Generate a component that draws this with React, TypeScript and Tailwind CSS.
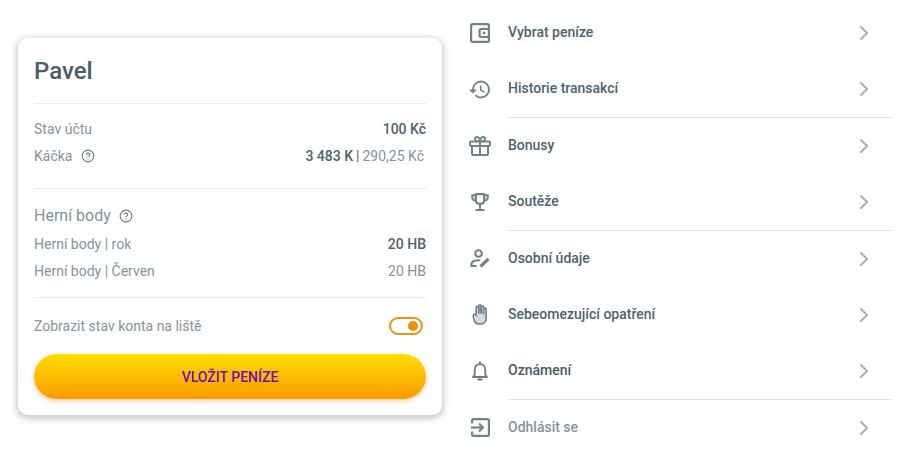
import React from "react";
import { ChevronRight, CircleHelp } from "lucide-react";
import { MdHistory } from "react-icons/md";

const WalletIcon = () => (
  <svg width="20" height="20" viewBox="0 0 20 20" fill="none" stroke="currentColor" strokeWidth="2.2">
    <path d="M1.1 2.5 C1.1 1.6 1.6 1.1 2.5 1.1 H17.5 C18.4 1.1 18.9 1.6 18.9 2.5 V17.5 C18.9 18.4 18.4 18.9 17.5 18.9 H2.5 C1.6 18.9 1.1 18.4 1.1 17.5 Z" />
    <path d="M18.9 6 H11 C10.2 6 9.6 6.6 9.6 7.4 V12.6 C9.6 13.4 10.2 14 11 14 H18.9" />
    <circle cx="14" cy="10" r="1.4" fill="currentColor" stroke="none" />
  </svg>
);

const GiftIcon = () => (
  <svg width="22" height="20" viewBox="0 0 22 20" fill="none" stroke="currentColor" strokeWidth="2" strokeLinejoin="round">
    <rect x="1" y="5.5" width="20" height="4.5" rx="1" />
    <path d="M3 10 V17.5 C3 18.4 3.6 19 4.5 19 H17.5 C18.4 19 19 18.4 19 17.5 V10" />
    <path d="M11 5.5 V19" />
    <path d="M11 5.5 C9 5.5 6 5.2 6 3 C6 1.6 7.2 1 8 1 C9.8 1 11 3.4 11 5.5 C11 3.4 12.2 1 14 1 C14.8 1 16 1.6 16 3 C16 5.2 13 5.5 11 5.5 Z" />
  </svg>
);

const TrophyIcon = () => (
  <svg width="18" height="18" viewBox="0 0 18 18" fill="none" stroke="currentColor" strokeWidth="2.3" strokeLinejoin="round">
    <path d="M4.8 1.2 H13.2 V7 C13.2 9.4 11.4 10.8 9 10.8 C6.6 10.8 4.8 9.4 4.8 7 Z" />
    <path d="M4.5 2.2 H1.2 V4 C1.2 6 2.5 7.6 4.8 7.6" strokeWidth="2" />
    <path d="M13.5 2.2 H16.8 V4 C16.8 6 15.5 7.6 13.2 7.6" strokeWidth="2" />
    <path d="M9 11 V16.5" strokeWidth="2" />
    <path d="M4.5 17 H13.5" strokeWidth="2" />
  </svg>
);

const PersonEditIcon = () => (
  <svg width="20" height="20" viewBox="0 0 20 20" fill="none" stroke="currentColor" strokeWidth="2.1" strokeLinecap="round" strokeLinejoin="round">
    <circle cx="8.5" cy="4.5" r="3.3" />
    <path d="M1.5 17 V15.5 C1.5 12.8 5 11.3 9.5 11.3" />
    <path d="M1.5 17 H6" />
    <path d="M10.5 17.5 L18.5 9.8" strokeWidth="3.2" strokeLinecap="butt" />
  </svg>
);

const HandIcon = () => (
  <svg width="16" height="21" viewBox="0 0 16 21" fill="none" stroke="currentColor" strokeWidth="1.7" strokeLinecap="round" strokeLinejoin="round">
    <path d="M5 10 H13.5 V15 C13.5 17.5 12 19.4 9 19.4 H7 C5 19.4 3.8 18.5 3.2 17 L4.2 12 Z" fill="currentColor" fillOpacity="0.3" stroke="none" />
    <path d="M4.2 10 V3.6 C4.2 2.8 4.8 2.3 5.4 2.3 C6.1 2.3 6.7 2.8 6.7 3.6 V9" />
    <path d="M6.7 9 V2 C6.7 1.3 7.3 0.9 7.9 0.9 C8.5 0.9 9.1 1.3 9.1 2 V9" />
    <path d="M9.1 9 V3 C9.1 2.3 9.7 1.8 10.3 1.8 C10.9 1.8 11.5 2.3 11.5 3 V9.5" />
    <path d="M11.5 9.5 V5.2 C11.5 4.5 12.1 4 12.8 4 C13.5 4 14.1 4.5 14.1 5.2 V14.5 C14.1 17.8 12 20 9 20 H7 C4.4 20 3.2 19 2.5 17 L1.3 12.6 C1 11.4 1.5 10.6 2.5 10.4 C3.4 10.2 4.1 10.9 4.2 12" />
  </svg>
);

const BellIcon = () => (
  <svg width="16" height="20" viewBox="0 0 16 20" fill="none" stroke="currentColor" strokeWidth="1.8" strokeLinejoin="round">
    <path d="M1 16 H15 L13.2 13.6 V8.5 C13.2 5.4 11 3.1 8 3.1 C5 3.1 2.8 5.4 2.8 8.5 V13.6 Z" />
    <path d="M8 0.5 V3" />
    <path d="M6.4 18.6 H9.6" strokeWidth="2" strokeLinecap="round" />
  </svg>
);

const LogoutIcon = () => (
  <svg width="19" height="19" viewBox="0 0 19 19" fill="none" stroke="currentColor" strokeWidth="2.2" strokeLinejoin="round">
    <path d="M1.1 5.5 V2.5 C1.1 1.6 1.6 1.1 2.5 1.1 H16.5 C17.4 1.1 17.9 1.6 17.9 2.5 V16.5 C17.9 17.4 17.4 17.9 16.5 17.9 H2.5 C1.6 17.9 1.1 17.4 1.1 16.5 V13.5" />
    <path d="M0 9.5 H11.5" />
    <path d="M8 5.5 L12 9.5 L8 13.5" />
  </svg>
);

const menuItems = [
  { label: "Vybrat peníze", icon: <WalletIcon />, color: "text-[#4f626c]", iconColor: "text-[#748189]", divider: false },
  { label: "Historie transakcí", icon: <MdHistory size={25} />, color: "text-[#4f626c]", iconColor: "text-[#748189]", divider: true },
  { label: "Bonusy", icon: <GiftIcon />, color: "text-[#4f626c]", iconColor: "text-[#748189]", divider: false },
  { label: "Soutěže", icon: <TrophyIcon />, color: "text-[#4f626c]", iconColor: "text-[#748189]", divider: true },
  { label: "Osobní údaje", icon: <PersonEditIcon />, color: "text-[#4f626c]", iconColor: "text-[#748189]", divider: false },
  { label: "Sebeomezující opatření", icon: <HandIcon />, color: "text-[#4f626c]", iconColor: "text-[#748189]", divider: false },
  { label: "Oznámení", icon: <BellIcon />, color: "text-[#455a64]", iconColor: "text-[#6b7a84]", divider: true },
  { label: "Odhlásit se", icon: <LogoutIcon />, color: "text-[#87939b]", iconColor: "text-[#748189]", divider: false },
];

const Help = () => <CircleHelp size={14} strokeWidth={1.9} className="text-[#6f7c85]" />;

const Divider = () => <div className="h-px bg-[#e9ecee]" />;

export default function App() {
  return (
    <div className="flex h-[457px] w-[900px] overflow-hidden bg-white font-['Roboto',sans-serif]">
      {/* Account card */}
      <div className="w-[460px] pl-[18px] pr-[18px] pt-[38px]">
        <div className="h-[377px] rounded-[10px] bg-white px-4 shadow-[0_2px_6px_2px_rgba(69,90,100,0.3)]">
          <div className="flex h-[65px] items-center text-2xl font-medium text-[#4a5d68]">Pavel</div>
          <Divider />

          <div className="flex h-[84px] flex-col pt-[11px] text-sm">
            <div className="flex h-[27px] items-center justify-between">
              <span className="text-[#87939b]">Stav účtu</span>
              <span className="font-medium text-[#4f626c]">100 Kč</span>
            </div>
            <div className="flex h-[27px] items-center justify-between">
              <span className="flex items-center gap-[9px] text-[#87939b]">
                Káčka <Help />
              </span>
              <span className="flex items-center pr-0.5">
                <span className="font-medium text-[#4f626c]">3 483 K</span>
                <span className="mx-[3px] text-[#4f626c]">|</span>
                <span className="text-[#87939b]">290,25 Kč</span>
              </span>
            </div>
          </div>
          <Divider />

          <div className="flex h-[108px] flex-col pt-[15px] text-sm">
            <div className="flex h-[24px] items-center gap-2 text-base text-[#87939b]">
              Herní body <Help />
            </div>
            <div className="mt-[2px] flex h-[27px] items-center justify-between">
              <span className="text-[#87939b]">Herní body | rok</span>
              <span className="font-medium text-[#4f626c]">20 HB</span>
            </div>
            <div className="flex h-[27px] items-center justify-between">
              <span className="text-[#87939b]">Herní body | Červen</span>
              <span className="text-[#87939b]">20 HB</span>
            </div>
          </div>
          <Divider />

          <div className="flex h-[56px] items-center justify-between text-sm text-[#87939b]">
            Zobrazit stav konta na liště
            <div className="mr-[3px] flex h-[18px] w-[34px] items-center justify-end rounded-full border-2 border-[#ee9411] pr-[3px]">
              <div className="h-[10px] w-[10px] rounded-full bg-[#ee8c0f]" />
            </div>
          </div>

          <button className="flex h-[45px] w-full items-center justify-center rounded-full bg-gradient-to-b from-[#ffdd00] to-[#f89a00] text-sm font-medium text-[#6f0fb5] shadow-[0_2px_5px_rgba(230,120,40,0.4)]">
            VLOŽIT PENÍZE
          </button>
        </div>
      </div>

      {/* Menu list */}
      <div className="w-[440px] pt-[4.965px] pl-[8px] pr-[8px]">
        {menuItems.map((item) => (
          <div key={item.label} className="relative flex h-[56.35px] items-center">
            <div className={`flex w-[24px] justify-center ${item.iconColor}`}>{item.icon}</div>
            <span className={`ml-[16px] flex-1 pb-[2px] text-sm font-medium ${item.color}`}>{item.label}</span>
            <ChevronRight size={24} className="mr-[16px] text-[#a9b0b5]" strokeWidth={2} />
            {item.divider && <div className="absolute bottom-[-0.5px] left-[40px] right-0 h-px bg-[#dfe2e4]" />}
          </div>
        ))}
      </div>
    </div>
  );
}
